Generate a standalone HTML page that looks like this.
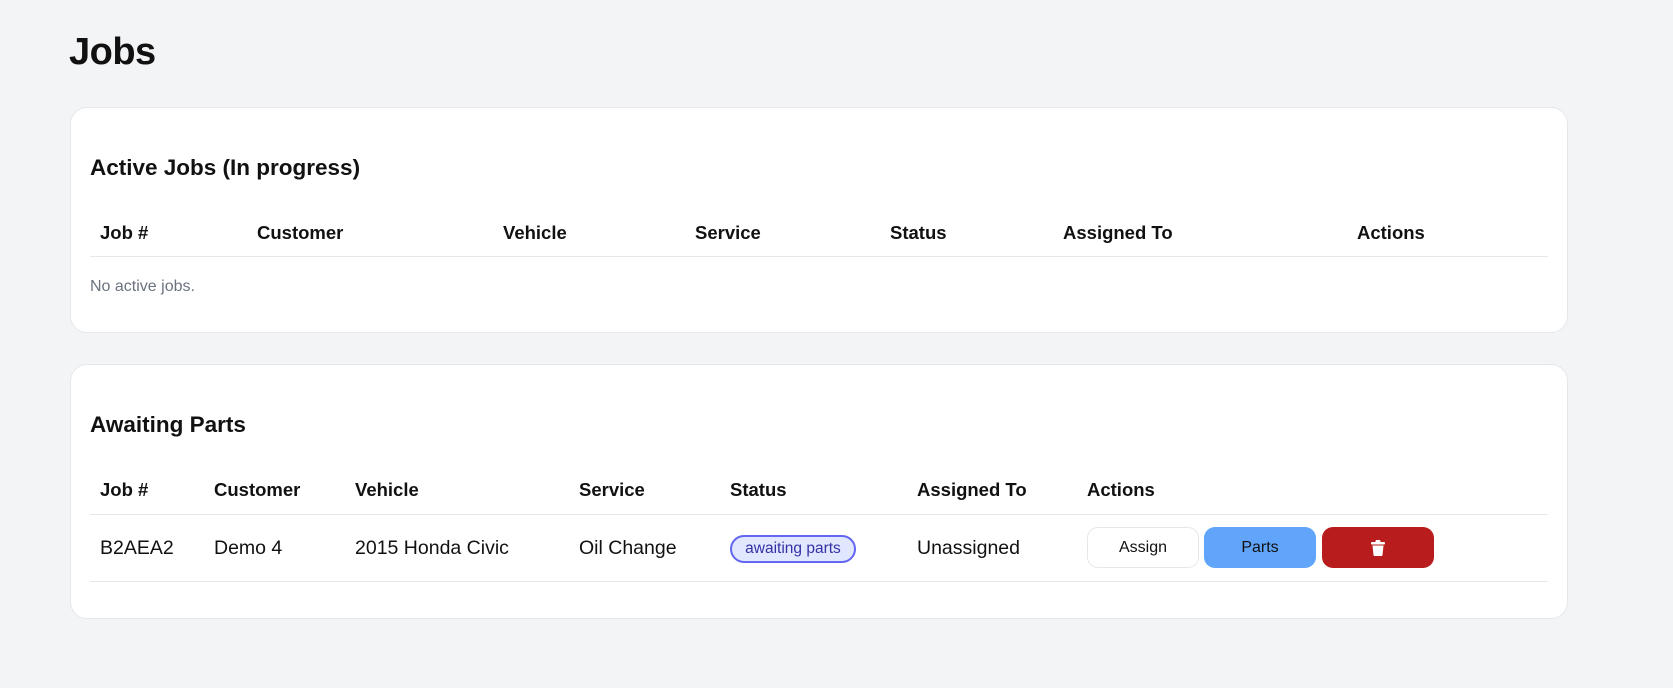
<!DOCTYPE html>
<html><head><meta charset="utf-8"><style>
*{box-sizing:border-box;margin:0;padding:0}
body{width:1673px;height:688px;background:#f3f4f6;font-family:"Liberation Sans",sans-serif;color:#111;position:relative;overflow:hidden}
.a{position:absolute;white-space:nowrap}
h1{position:absolute;left:69px;top:31px;font-size:38px;font-weight:700;letter-spacing:-0.5px}
.card{position:absolute;left:70px;width:1498px;background:#fff;border:1px solid #e5e7eb;border-radius:17px}
.h2{font-size:22.5px;font-weight:700}
.th{font-size:18.5px;font-weight:700}
.td{font-size:19.5px}
.line{position:absolute;left:90px;width:1458px;height:1px;background:#e5e7eb}
.btn{position:absolute;top:527px;height:41px;width:112px;border-radius:11px;font-size:16px;display:flex;align-items:center;justify-content:center}
</style></head><body>
<h1>Jobs</h1>
<div class="card" style="top:107px;height:226px"></div>
<div class="card" style="top:364px;height:255px"></div>

<div class="a h2" style="left:90px;top:155px">Active Jobs (In progress)</div>
<div class="a th" style="left:100px;top:222px">Job #</div>
<div class="a th" style="left:257px;top:222px">Customer</div>
<div class="a th" style="left:503px;top:222px">Vehicle</div>
<div class="a th" style="left:695px;top:222px">Service</div>
<div class="a th" style="left:890px;top:222px">Status</div>
<div class="a th" style="left:1063px;top:222px">Assigned To</div>
<div class="a th" style="left:1357px;top:222px">Actions</div>
<div class="line" style="top:256px"></div>
<div class="a" style="left:90px;top:278px;font-size:16px;color:#6b7280">No active jobs.</div>

<div class="a h2" style="left:90px;top:412px">Awaiting Parts</div>
<div class="a th" style="left:100px;top:479px">Job #</div>
<div class="a th" style="left:214px;top:479px">Customer</div>
<div class="a th" style="left:355px;top:479px">Vehicle</div>
<div class="a th" style="left:579px;top:479px">Service</div>
<div class="a th" style="left:730px;top:479px">Status</div>
<div class="a th" style="left:917px;top:479px">Assigned To</div>
<div class="a th" style="left:1087px;top:479px">Actions</div>
<div class="line" style="top:514px"></div>
<div class="a td" style="left:100px;top:537px">B2AEA2</div>
<div class="a td" style="left:214px;top:537px">Demo 4</div>
<div class="a td" style="left:355px;top:537px">2015 Honda Civic</div>
<div class="a td" style="left:579px;top:537px">Oil Change</div>
<div class="a" style="left:730px;top:535px;width:126px;height:28px;border:2px solid #6366f1;background:#e0e7ff;color:#3730a3;border-radius:14px;font-size:15.5px;display:flex;align-items:center;justify-content:center">awaiting parts</div>
<div class="a td" style="left:917px;top:537px">Unassigned</div>
<div class="btn" style="left:1087px;border:1px solid #e5e7eb;background:#fff">Assign</div>
<div class="btn" style="left:1204px;background:#60a5fa">Parts</div>
<div class="btn" style="left:1322px;background:#b91c1c"><svg width="14" height="16" viewBox="0 0 14 16"><rect x="0" y="2" width="14" height="2.5" rx="1" fill="#fff"/><rect x="4.5" y="0" width="5" height="2.5" rx="1" fill="#fff"/><path d="M1.5 5.5h11l-1 9.5a1 1 0 0 1-1 1h-7a1 1 0 0 1-1-1z" fill="#fff"/></svg></div>
<div class="line" style="top:581px"></div>
</body></html>
